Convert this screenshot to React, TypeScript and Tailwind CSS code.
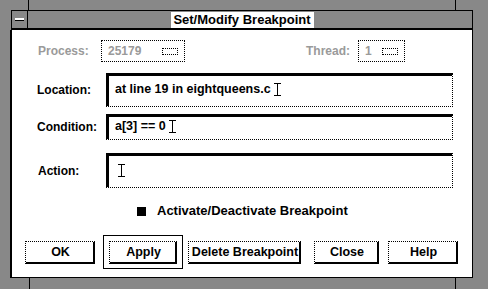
const checker = "bg-[#888888]";

function Cursor() {
  return (
    <svg width="7" height="13" viewBox="0 0 7 13" className="ml-[3px] shrink-0">
      <path d="M0 0.5H7M0 12.5H7M3.5 0.5V12.5" stroke="#000" strokeWidth="1" fill="none" />
    </svg>
  );
}

function Field({ h, children }: { h: string; children?: React.ReactNode }) {
  return (
    <div
      className={`w-[347px] ${h} flex items-center pl-[9px] bg-white border-r border-b border-dotted border-black shadow-[inset_3px_3px_0_#000] text-[12.5px]`}
    >
      {children}
    </div>
  );
}

function Button({ w, label }: { w: string; label: string }) {
  return (
    <div
      className={`${w} h-[23px] flex items-center justify-center border-t border-l border-dotted border-black shadow-[inset_-2px_-2px_0_#000] text-[12.5px] font-bold whitespace-nowrap`}
    >
      {label}
    </div>
  );
}

function OptionBox({ w, value }: { w: string; value: string }) {
  return (
    <div className={`${w} h-[22px] flex items-center justify-between pl-[6px] pr-[6px] border border-dotted border-black`}>
      <span className="text-[#9a9a9a]">{value}</span>
      <div className="w-[16px] h-[7px] border border-dotted border-black" />
    </div>
  );
}

export default function App() {
  return (
    <div className={`w-[488px] h-[289px] flex flex-col ${checker} font-['Liberation_Sans',Arial,sans-serif] text-black`}>
      <div className="h-[10px] flex shrink-0">
        <div className="w-[29px] border-r border-black" />
        <div className="flex-1" />
        <div className="w-[33px] border-l border-black" />
      </div>
      <div className="flex flex-1 min-h-0">
        <div className="w-[10px]" />
        <div className="w-[463px] flex flex-col">
          <div className="ml-[1px] w-[462px] h-[20px] grid grid-cols-[16px_1fr_16px] items-center border-t border-l border-r border-black border-b-2 border-b-black">
            <div className="h-[17px] flex items-center justify-center border-r border-black">
              <div className="w-[9px] h-[3px] bg-white border-b border-black" />
            </div>
            <div className="flex justify-center">
              <div className="w-[143px] h-[16px] bg-white flex items-center justify-center text-[13px] font-bold leading-none">
                Set/Modify Breakpoint
              </div>
            </div>
            <div />
          </div>
          <div className="flex-1 bg-white border-l-2 border-r border-b border-black flex flex-col text-[12px] font-bold">
            <div className="mt-[10px] h-[22px] flex items-center pl-[26px] pr-[67px]">
              <span className="w-[63px] text-[#9a9a9a]">Process:</span>
              <OptionBox w="w-[84px]" value="25179" />
              <div className="flex-1" />
              <span className="mr-[8px] text-[#9a9a9a]">Thread:</span>
              <OptionBox w="w-[47px]" value="1" />
            </div>
            <div className="mt-[11px] flex items-center pl-[25px]">
              <span className="w-[69px]">Location:</span>
              <Field h="h-[34px]">
                <span>at line 19 in eightqueens.c</span>
                <Cursor />
              </Field>
            </div>
            <div className="mt-[7px] flex items-center pl-[25px]">
              <span className="w-[69px]">Condition:</span>
              <Field h="h-[26px]">
                <span>a[3] == 0</span>
                <Cursor />
              </Field>
            </div>
            <div className="mt-[13px] flex items-center pl-[25px]">
              <span className="w-[69px] pl-[1px]">Action:</span>
              <Field h="h-[35px]">
                <Cursor />
              </Field>
            </div>
            <div className="mt-[18px] h-[10px] flex items-center pl-[125px]">
              <div className="w-[9px] h-[9px] bg-black" />
              <span className="ml-[11px] text-[13px]">Activate/Deactivate Breakpoint</span>
            </div>
            <div className="mt-[19px] h-[34px] flex items-center pl-[13px]">
              <Button w="w-[70px]" label="OK" />
              <div className="ml-[8px] w-[80px] h-[34px] flex items-center justify-center border border-black">
                <Button w="w-[68px]" label="Apply" />
              </div>
              <div className="ml-[5px]">
                <Button w="w-[113px]" label="Delete Breakpoint" />
              </div>
              <div className="ml-[13px]">
                <Button w="w-[65px]" label="Close" />
              </div>
              <div className="ml-[9px]">
                <Button w="w-[70px]" label="Help" />
              </div>
            </div>
          </div>
        </div>
        <div className="flex-1" />
      </div>
      <div className="h-[11px] flex shrink-0">
        <div className="w-[30px] border-r border-black" />
        <div className="flex-1" />
        <div className="w-[33px] border-l border-black" />
      </div>
    </div>
  );
}
